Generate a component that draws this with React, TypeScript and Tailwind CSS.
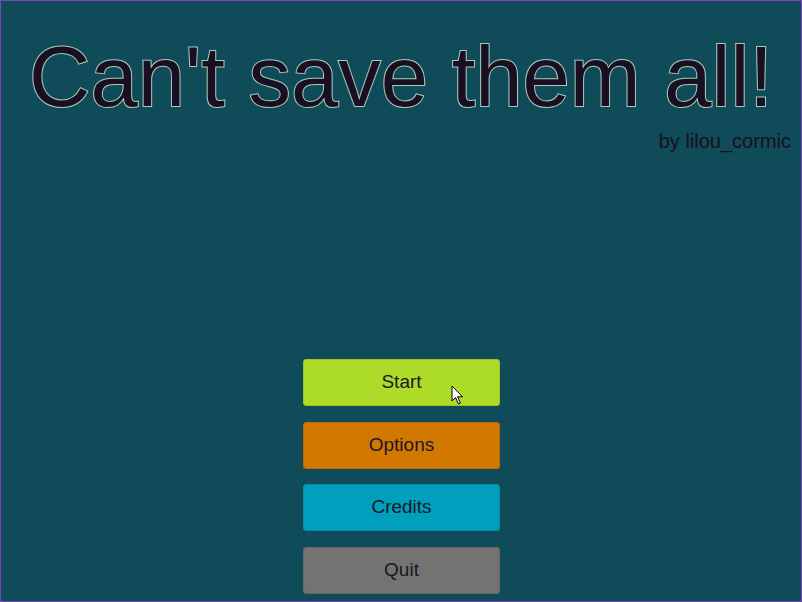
import React from "react";

const font = { fontFamily: '"Liberation Sans", Arial, sans-serif' };

function Btn({ label, cls }: { label: string; cls: string }) {
  return (
    <div
      className={`w-[197px] h-[47px] rounded-[3px] flex items-center justify-center text-[19px] text-[#1c1626] ${cls}`}
    >
      {label}
    </div>
  );
}

export default function App() {
  return (
    <div
      className="relative w-[802px] h-[602px] bg-[#0f4b58] border border-[#7a45b8] overflow-hidden flex flex-col"
      style={font}
    >
      <div className="pt-[26px] flex justify-center">
        <div
          className="text-[85px] leading-[100px] whitespace-nowrap text-[#1a0f22]"
          style={{ WebkitTextStroke: "2px #a9cbb6", paintOrder: "stroke fill" }}
        >
          Can't save them all!
        </div>
      </div>
      <div className="flex justify-end pr-[10px] mt-[2px]">
        <div className="text-[20px] leading-[24px] text-[#1a0f22]">by lilou_cormic</div>
      </div>
      <div className="flex flex-col items-center gap-[15.5px] mt-[206px] ml-[1px]">
        <Btn label="Start" cls="bg-[#acdc28] border border-[#9ac422]" />
        <Btn label="Options" cls="bg-[#d27800] border border-[#b86a05]" />
        <Btn label="Credits" cls="bg-[#009fbd] border border-[#068ca6]" />
        <Btn label="Quit" cls="bg-[#737373] border border-[#666666]" />
      </div>
      <svg
        className="absolute left-[450px] top-[384px]"
        width="14"
        height="22"
        viewBox="0 0 14 22"
      >
        <path
          d="M1 1 L1 16 L4.5 12.5 L7.5 19 L9.5 18 L6.5 11.8 L11.5 11.8 Z"
          fill="#ffffff"
          stroke="#000000"
          strokeWidth="1"
          strokeLinejoin="miter"
        />
      </svg>
    </div>
  );
}
